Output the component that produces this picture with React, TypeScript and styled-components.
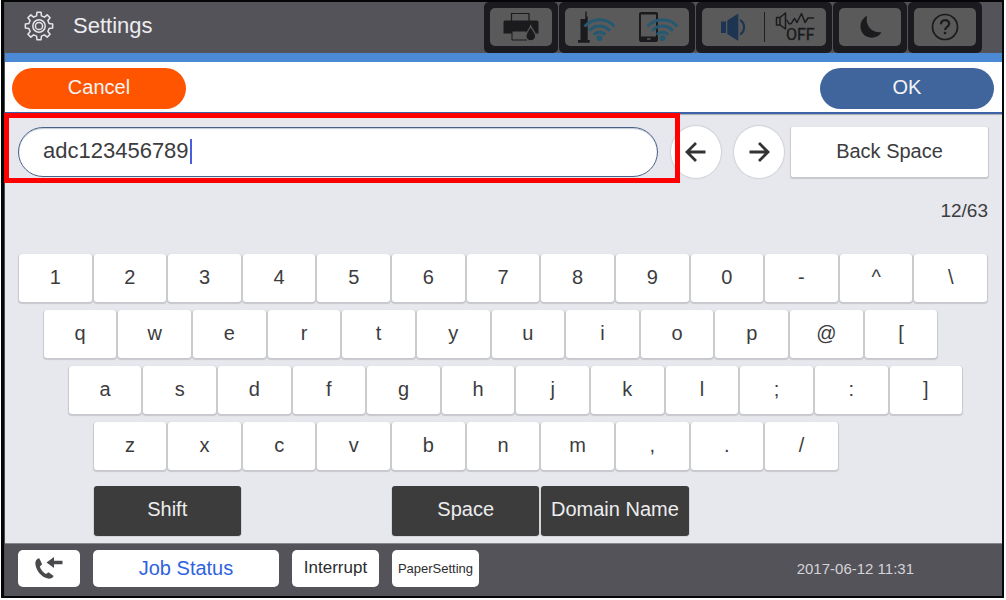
import React, { useState } from "react";
import styled, { createGlobalStyle, css } from "styled-components";

const GlobalStyle = createGlobalStyle`
  *, *::before, *::after { box-sizing: border-box; }
  body {
    margin: 0;
    background: #ffffff;
    font-family: "Liberation Sans", Arial, sans-serif;
    color: #3c3c3e;
  }
  button, input { font: inherit; color: inherit; }
  button { padding: 0; border: 0; cursor: pointer; }
  svg { display: block; }
`;

const Screen = styled.main`
  display: flex;
  flex-direction: column;
  min-height: calc(100vh - 2px);
  margin: 0 2px 2px 1px;
  border: solid #050608;
  border-width: 2px 2px 2px 3px;
  box-shadow: inset 1px 0 0 #4b4c50;
  padding-left: 1px;
`;

const Header = styled.header`
  display: flex;
  align-items: stretch;
  height: 60px;
  padding: 0 20px 0 18px;
  background: #54535a;
  border-bottom: 9px solid #4c8ad6;
`;

const Title = styled.h1`
  display: flex;
  align-items: center;
  gap: 18px;
  flex: 1;
  margin: 0;
  padding-bottom: 3px;
  font-size: 22px;
  line-height: 26px;
  font-weight: 400;
  color: #ececee;
`;

const StatusBar = styled.div`
  display: flex;
  gap: 1px;
`;

const StatusCell = styled.div`
  padding: 6px 6px 7px;
  background: #1b1a1f;
  border-radius: 5px;
`;

const StatusPanel = styled.button<{ $wide?: boolean }>`
  display: flex;
  align-items: center;
  justify-content: center;
  width: ${(p) => (p.$wide ? 124 : 62)}px;
  height: 38px;
  border-radius: 5px;
  background: #5a5a5b;
`;

const PanelHalf = styled.span`
  display: flex;
  flex: 1;
  align-items: center;
  justify-content: center;
  height: 30px;

  & + & { border-left: 1px solid transparent; }
`;

const DividedHalf = styled(PanelHalf)`
  && { border-left: 1px solid #1f1f22; }
`;

const ActionBar = styled.div`
  display: flex;
  justify-content: space-between;
  padding: 6px 8px 3px 7px;
  background: #ffffff;
  border-bottom: 2px solid #3d62a8;
`;

const PillButton = styled.button<{ $tone: string }>`
  width: 174px;
  height: 41px;
  padding-bottom: 2px;
  border-radius: 21px;
  background: ${(p) => p.$tone};
  color: #f4f4f6;
  font-size: 20px;
`;

const Body = styled.section`
  flex: 1;
  padding: 12px 14px 6px 13px;
  background: #e6e8ed;
  box-shadow: inset 0 2px 1px -1px #a9abb2;
`;

const EntryRow = styled.div`
  position: relative;
  display: flex;
  align-items: center;
  height: 51px;
`;

const Field = styled.label`
  display: flex;
  flex: 1;
  align-items: center;
  height: 50px;
  padding: 0 24px;
  border: 1px solid #4a6288;
  border-radius: 25px;
  background: #ffffff;
  box-shadow: inset 0 1px 1px #c3cad6;
`;

const FieldInput = styled.input`
  min-width: 1ch;
  padding: 0 0 2px;
  border: 0;
  outline: 0;
  background: transparent;
  font-size: 22px;
  line-height: 26px;
  caret-color: transparent;
`;

const Caret = styled.span`
  width: 2px;
  height: 25px;
  background: #4a5fe0;
`;

const HighlightFrame = styled.div`
  position: absolute;
  inset: -13px auto auto -14px;
  width: calc(100% - 294px);
  height: 70px;
  border: 5px solid #ff0000;
  pointer-events: none;
`;

const RoundButton = styled.button`
  display: grid;
  place-items: center;
  width: 50px;
  height: 52px;
  margin-left: 13px;
  border-radius: 50%;
  background: #ffffff;
  box-shadow: 0 0 1px 1px #cfd1d6;
`;

const keySurface = css`
  background: #ffffff;
  box-shadow: 0 1px 1px 1px #c6c8cc;
`;

const BackSpaceKey = styled.button`
  ${keySurface}
  width: 197px;
  height: 50px;
  margin-left: 7px;
  border-radius: 2px;
  font-size: 20px;
`;

const Counter = styled.output`
  display: block;
  margin: 22px 0 32px;
  font-size: 19px;
  line-height: 23px;
  text-align: right;
`;

const Keyboard = styled.div`
  display: grid;
  grid-template-columns: repeat(39, 1fr);
  row-gap: 8px;
`;

const Key = styled.button<{ $start?: number }>`
  ${keySurface}
  grid-column: ${(p) => (p.$start ? `${p.$start} / span 3` : "span 3")};
  min-width: 0;
  height: 48px;
  margin: 0 1px;
  padding-bottom: 2px;
  border-radius: 3px;
  font-size: 20px;
`;

const DarkKey = styled.button<{ $start: number }>`
  grid-column: ${(p) => p.$start} / span 6;
  height: 49px;
  margin: 8px 1px 0;
  padding-bottom: 3px;
  border-radius: 3px;
  background: #3c3c3d;
  box-shadow: 0 1px 1px #2a2a2b;
  color: #ededee;
  font-size: 20px;
  white-space: nowrap;
`;

const Footer = styled.footer`
  display: flex;
  align-items: center;
  gap: 13px;
  height: 53px;
  padding: 0 88px 3px 13px;
  background: #54535a;
  border-top: 1px solid #85858c;
`;

const FooterButton = styled.button<{ $width: number; $size?: number; $tone?: string }>`
  display: flex;
  align-items: center;
  justify-content: center;
  width: ${(p) => p.$width}px;
  height: 37px;
  padding-bottom: 1px;
  border-radius: 5px;
  background: #ffffff;
  color: ${(p) => p.$tone ?? "#2c2c2e"};
  font-size: ${(p) => p.$size ?? 20}px;
  white-space: nowrap;
`;

const Clock = styled.time`
  margin-left: auto;
  color: #d4d4d8;
  font-size: 15px;
`;

const INK = "#1b1b1e";
const TEAL = "#255871";
const NAVY = "#1d3453";

function gearOutline(teeth: number, cx: number, cy: number, outer: number, inner: number) {
  const step = (Math.PI * 2) / teeth;
  const points: string[] = [];
  for (let i = 0; i < teeth; i++) {
    const mid = i * step - Math.PI / 2;
    [
      [-0.3, inner],
      [-0.19, outer],
      [0.19, outer],
      [0.3, inner],
    ].forEach(([offset, r]) => {
      const a = mid + offset * step;
      points.push(`${(cx + r * Math.cos(a)).toFixed(2)} ${(cy + r * Math.sin(a)).toFixed(2)}`);
    });
  }
  return `M${points.join("L")}Z`;
}

const GearIcon = () => (
  <svg width="32" height="32" viewBox="0 0 32 32" fill="none" stroke="#e6e6e8" strokeWidth="1.5" strokeLinejoin="round" aria-hidden="true">
    <path d={gearOutline(8, 16, 16, 13.8, 10.4)} />
    <circle cx="16" cy="16" r="6.2" />
    <circle cx="16" cy="16" r="3.6" />
  </svg>
);

const PrinterIcon = () => (
  <svg width="36" height="30" viewBox="0 0 36 30" aria-hidden="true">
    <path d="M8.5 9V1.5h17.500V9" fill="none" stroke={INK} strokeWidth="1.2" />
    <path d="M2 8.500h32a1.500 1.500 0 0 1 1.500 1.500v11.500H.5V10A1.500 1.500 0 0 1 2 8.500Z" fill={INK} />
    <path d="M9 19h15v9H9Z" fill="#5a5a5b" stroke={INK} strokeWidth="1" />
    <path d="M27.700 14c1 3 5 6.500 5 10a4.900 4.900 0 0 1-9.800 0c0-3.500 3.800-7 4.800-10Z" fill={INK} stroke="#5a5a5b" strokeWidth="1.200" />
  </svg>
);

const WifiWaves = () => (
  <g fill="none" stroke={TEAL} strokeWidth="3">
    <path d="M7.500 16.500a20 20 0 0 1 30 0" />
    <path d="M12.200 20.800a13.500 13.500 0 0 1 20.600 0" />
    <path d="M16.800 24.800a7.600 7.600 0 0 1 11.400 0" />
    <circle cx="22.500" cy="28.200" r="2.900" fill={TEAL} stroke="none" />
  </g>
);

const RouterIcon = () => (
  <svg width="38" height="34" viewBox="0 0 38 34" aria-hidden="true">
    <path d="M8.300 1.500h1.400v5h1V30h2v2.800H1V30h2.500V9h4.800Z" fill={INK} />
    <WifiWaves />
  </svg>
);

const PhoneWifiIcon = () => (
  <svg width="42" height="34" viewBox="-3 0 42 34" aria-hidden="true">
    <path
      fillRule="evenodd"
      fill={INK}
      d="M1 2h15a2 2 0 0 1 2 2v26a2 2 0 0 1-2 2H1a2 2 0 0 1-2-2V4a2 2 0 0 1 2-2ZM1 4.500V26.500H16V4.500ZM7 28.200v1.600h3.500v-1.600Z"
    />
    <WifiWaves />
  </svg>
);

const SpeakerIcon = () => (
  <svg width="28" height="32" viewBox="0 0 28 32" aria-hidden="true">
    <path d="M2 10.500h5v11.500H2ZM8.300 9.500 19.300 2.500v27.500L8.300 23Z" fill={NAVY} />
    <path d="M21.800 9.500a8.600 8.600 0 0 1 0 13.500" fill="none" stroke={NAVY} strokeWidth="2.200" strokeLinecap="round" />
  </svg>
);

const SoundOffIcon = () => (
  <svg width="42" height="32" viewBox="0 0 42 32" fill="none" stroke={INK} strokeWidth="1.500" strokeLinejoin="round" aria-hidden="true">
    <path d="M2.500 6.500H6v7.500H2.500ZM6 6.500l5.500-4.500v16L6 14" />
    <path d="M12.500 9c1 0 1.500 4 3.500 4s3-4 4.500-5.500l2.500 4 4.500-9 3.500 9 3-4.500h6" />
    <text x="12" y="29" fill={INK} strokeWidth="0.400" fontFamily="Roboto, sans-serif" fontSize="16">OFF</text>
  </svg>
);

const MoonIcon = () => (
  <svg width="24" height="24" viewBox="0 0 24 24" aria-hidden="true">
    <path d="M9 1C0 5 .5 19 10 22c5 1.800 11 0 13.500-5C17 18.500 6.500 13 9 1Z" fill={INK} />
  </svg>
);

const HelpIcon = () => (
  <svg width="28" height="28" viewBox="0 0 28 28" fill="none" stroke={INK} aria-hidden="true">
    <circle cx="14" cy="14" r="12.500" strokeWidth="1.700" />
    <path d="M10 11.300c0-5.500 8.200-5.200 8.200-.5 0 3-4.100 3.200-4.100 6.200" strokeWidth="2.200" />
    <path d="M14 18.800v2.400" strokeWidth="2.400" />
  </svg>
);

const ArrowIcon = ({ forward = false }: { forward?: boolean }) => (
  <svg width="22" height="22" viewBox="0 0 22 22" fill="none" stroke="#333335" strokeWidth="2.800" aria-hidden="true">
    <path d={forward ? "M1.500 11h18M11 2l9 9-9 9" : "M20.500 11h-18M11 2l-9 9 9 9"} />
  </svg>
);

const CallbackIcon = () => (
  <svg width="30" height="24" viewBox="0 0 30 24" fill="#4a4a4d" aria-hidden="true">
    <path d="M5.200 2.200 7.700 7.200c.4.900.2 1.500-.5 2.100L5.800 10.500c1 3.200 3.100 5.800 6 7.600l1.700-1.200c.7-.5 1.400-.5 2.100 0l4 3c-.8 2-3.300 3.100-5.600 2.700C7.500 21.500 1.800 14.500 1.300 7.600 1.200 5 2.800 2.500 5.200 2.200Z" />
    <path d="M12.500 6.500 20 1v3.800h8.500v3.400H20V12Z" />
  </svg>
);

const KEY_ROWS = [
  { start: 1, keys: "1234567890-^\\" },
  { start: 2, keys: "qwertyuiop@[" },
  { start: 3, keys: "asdfghjkl;:]" },
  { start: 4, keys: "zxcvbnm,./" },
];

const MAX_LENGTH = 63;

export default function App() {
  const [value, setValue] = useState("adc123456789");
  const type = (text: string) => setValue((v) => (v + text).slice(0, MAX_LENGTH));

  return (
    <>
      <GlobalStyle />
      <Screen>
        <Header>
          <Title>
            <GearIcon />
            Settings
          </Title>
          <StatusBar>
            <StatusCell>
              <StatusPanel aria-label="Ink status"><PrinterIcon /></StatusPanel>
            </StatusCell>
            <StatusCell>
              <StatusPanel $wide aria-label="Network status">
                <PanelHalf><RouterIcon /></PanelHalf>
                <PanelHalf><PhoneWifiIcon /></PanelHalf>
              </StatusPanel>
            </StatusCell>
            <StatusCell>
              <StatusPanel $wide aria-label="Sound">
                <PanelHalf><SpeakerIcon /></PanelHalf>
                <DividedHalf><SoundOffIcon /></DividedHalf>
              </StatusPanel>
            </StatusCell>
            <StatusCell>
              <StatusPanel aria-label="Sleep"><MoonIcon /></StatusPanel>
            </StatusCell>
            <StatusCell>
              <StatusPanel aria-label="Help"><HelpIcon /></StatusPanel>
            </StatusCell>
          </StatusBar>
        </Header>

        <ActionBar>
          <PillButton $tone="#ff5500">Cancel</PillButton>
          <PillButton $tone="#40659c">OK</PillButton>
        </ActionBar>

        <Body>
          <EntryRow>
            <Field>
              <FieldInput
                aria-label="Network name"
                value={value}
                maxLength={MAX_LENGTH}
                onChange={(e) => setValue(e.target.value)}
                style={{ width: `${value.length}ch` }}
              />
              <Caret />
            </Field>
            <RoundButton aria-label="Move left"><ArrowIcon /></RoundButton>
            <RoundButton aria-label="Move right"><ArrowIcon forward /></RoundButton>
            <BackSpaceKey onClick={() => setValue((v) => v.slice(0, -1))}>Back Space</BackSpaceKey>
            <HighlightFrame />
          </EntryRow>
          <Counter>{value.length}/{MAX_LENGTH}</Counter>
          <Keyboard>
            {KEY_ROWS.map((row) =>
              row.keys.split("").map((k, i) => (
                <Key key={k} $start={i === 0 ? row.start : undefined} onClick={() => type(k)}>
                  {k}
                </Key>
              ))
            )}
            <DarkKey $start={4}>Shift</DarkKey>
            <DarkKey $start={16} onClick={() => type(" ")}>Space</DarkKey>
            <DarkKey $start={22}>Domain Name</DarkKey>
          </Keyboard>
        </Body>

        <Footer>
          <FooterButton $width={62} aria-label="Callback"><CallbackIcon /></FooterButton>
          <FooterButton $width={186} $tone="#2f62e0">Job Status</FooterButton>
          <FooterButton $width={87} $size={17}>Interrupt</FooterButton>
          <FooterButton $width={87} $size={13}>PaperSetting</FooterButton>
          <Clock>2017-06-12 11:31</Clock>
        </Footer>
      </Screen>
    </>
  );
}
